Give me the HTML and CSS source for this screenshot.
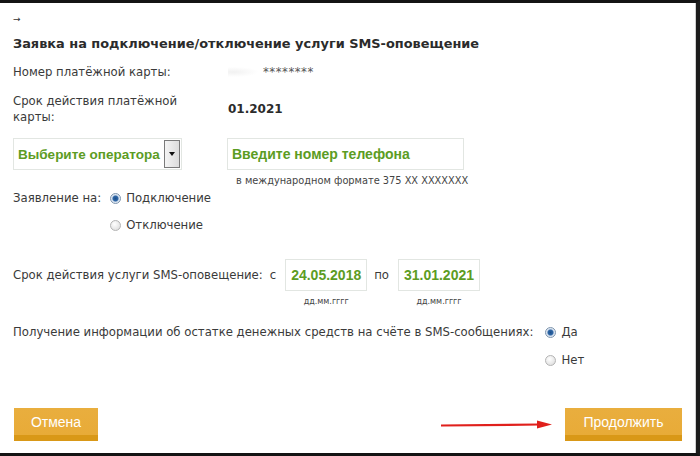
FILE: index.html
```html
<!DOCTYPE html>
<html lang="ru">
<head>
    <meta charset="UTF-8">
    <title>Заявка на SMS-оповещение</title>
    <link rel="stylesheet" href="styles.css">
</head>
<body>
    <div class="frame">
        <div class="back">&rarr;</div>
        <h1>Заявка на подключение/отключение услуги SMS-оповещение</h1>

        <div class="row row-card">
            <div class="label">Номер платёжной карты:</div>
            <div class="value masked"><span class="smudge"></span>********</div>
        </div>
        <div class="row row-expiry">
            <div class="label">Срок действия платёжной<br>карты:</div>
            <div class="value strong">01.2021</div>
        </div>

        <div class="row row-phone">
            <div class="select">
                <span class="select-text">Выберите оператора</span>
                <span class="select-btn"><i></i></span>
            </div>
            <div class="phone">
                <div class="field field-phone">Введите номер телефона</div>
                <div class="hint">в международном формате 375 XX XXXXXXX</div>
            </div>
        </div>

        <div class="choice choice-request">
            <span class="choice-label">Заявление на:</span>
            <div class="options">
                <label class="radio checked"><span class="dot"></span>Подключение</label>
                <label class="radio"><span class="dot"></span>Отключение</label>
            </div>
        </div>

        <div class="row row-period">
            <span class="period-label">Срок действия услуги SMS-оповещение:</span>
            <span class="sep">с</span>
            <div class="date">
                <div class="field field-date">24.05.2018</div>
                <div class="date-hint">дд.мм.гггг</div>
            </div>
            <span class="sep">по</span>
            <div class="date">
                <div class="field field-date">31.01.2021</div>
                <div class="date-hint">дд.мм.гггг</div>
            </div>
        </div>

        <div class="choice choice-balance">
            <span class="choice-label">Получение информации об остатке денежных средств на счёте в SMS-сообщениях:</span>
            <div class="options">
                <label class="radio checked"><span class="dot"></span>Да</label>
                <label class="radio"><span class="dot"></span>Нет</label>
            </div>
        </div>

        <div class="actions">
            <button class="btn btn-cancel">Отмена</button>
            <div class="next">
                <svg class="pointer" width="112" height="10" viewBox="0 0 112 10">
                    <path d="M0 5.5 L98 4.5" stroke="#e0201c" stroke-width="2.2" fill="none"/>
                    <path d="M96 0.5 L111 4.5 L96 8.5 Z" fill="#e0201c"/>
                </svg>
                <button class="btn btn-next">Продолжить</button>
            </div>
        </div>
    </div>
</body>
</html>
```

FILE: styles.css
```css
* {
    box-sizing: border-box;
}

body {
    margin: 0;
    background: #111;
    font-family: "DejaVu Sans", Verdana, sans-serif;
    font-size: 11.7px;
    color: #3a3a3a;
}

.frame {
    width: 700px;
    height: 456px;
    background: #fff;
    border-top: 3px solid #141414;
    border-right: 4px solid #1c1c1c;
    border-bottom: 3px solid #141414;
    box-shadow: inset -1px 0 0 #d0d0d0;
    padding: 0 0 0 13px;
}

.back {
    font-size: 9px;
    line-height: 10px;
    margin-top: 11px;
    color: #333;
}

h1 {
    font-size: 12.9px;
    font-weight: bold;
    color: #2b2b2b;
    margin: 12px 0 0;
    line-height: 16px;
}

.row {
    display: flex;
    align-items: center;
}

.label {
    width: 215px;
    line-height: 16px;
}

.row-card {
    height: 28px;
    margin-top: 6px;
}

.masked {
    color: #555;
    letter-spacing: 0.5px;
    display: flex;
    align-items: center;
}

.smudge {
    width: 35px;
    height: 12px;
    background: radial-gradient(ellipse at 15% 50%, #f1f1f1 0, #fff 60%);
}

.row-expiry {
    height: 34px;
    margin-top: 6px;
}

.strong {
    font-weight: bold;
    font-size: 12px;
    color: #2b2b2b;
}

.row-phone {
    margin-top: 12px;
    align-items: flex-start;
}

.select {
    width: 169px;
    height: 32px;
    border: 1px solid #e2e6e2;
    display: flex;
    align-items: center;
    justify-content: space-between;
    padding: 0 1px 0 4px;
    font-family: "Liberation Sans", Arial, sans-serif;
    font-weight: bold;
    font-size: 13.5px;
    color: #5c9c23;
}

.select-text {
    white-space: nowrap;
}

.select-btn {
    flex-shrink: 0;
    width: 16px;
    height: 28px;
    border: 1px solid #7a7a7a;
    background: linear-gradient(to right, #f4f4f4, #dcdcdc);
    display: flex;
    align-items: center;
    justify-content: center;
}

.select-btn i {
    width: 0;
    height: 0;
    border-left: 3px solid transparent;
    border-right: 3px solid transparent;
    border-top: 4px solid #111;
}

.phone {
    margin-left: 45px;
}

.field {
    height: 32px;
    border: 1px solid #e2e6e2;
    display: flex;
    align-items: center;
    font-family: "Liberation Sans", Arial, sans-serif;
    font-weight: bold;
    font-size: 14px;
    color: #5c9c23;
}

.field-phone {
    width: 237px;
    padding-left: 4px;
}

.hint {
    font-size: 9.8px;
    color: #444;
    margin: 5px 0 0 9px;
}

.choice {
    display: flex;
    align-items: flex-start;
    margin-top: 4px;
}

.choice-label {
    line-height: 16px;
}

.choice-request .choice-label {
    margin-right: 9px;
}

.options {
    display: flex;
    flex-direction: column;
    gap: 11px;
}

.radio {
    display: flex;
    align-items: center;
    line-height: 16px;
}

.dot {
    width: 11px;
    height: 11px;
    border-radius: 50%;
    border: 1px solid #b4b4b4;
    background: radial-gradient(circle at 40% 35%, #fff, #d8d8d8);
    margin-right: 5px;
}

.checked .dot {
    border-color: #7d94ad;
    background: radial-gradient(circle, #1c4f8c 0, #2f67a6 2.5px, #cfdcec 3.5px, #f4f7fb 5px);
}

.row-period {
    margin-top: 26px;
    align-items: flex-start;
}

.period-label,
.sep {
    line-height: 32px;
}

.sep {
    margin: 0 9px 0 7px;
}

.date {
    display: flex;
    flex-direction: column;
    align-items: center;
}

.field-date {
    width: 82px;
    justify-content: center;
}

.date-hint {
    font-size: 8px;
    color: #444;
    margin-top: 6px;
}

.choice-balance {
    margin-top: 18px;
}

.choice-balance .choice-label {
    margin-right: 12px;
}

.choice-balance .options {
    gap: 12px;
}

.actions {
    display: flex;
    justify-content: space-between;
    align-items: center;
    margin-top: 40px;
    padding-right: 14px;
}

.btn {
    height: 33px;
    padding: 0 0 5px;
    border: none;
    border-radius: 0;
    background: linear-gradient(to bottom, #e9ae3e 0, #e8ab38 81%, #d99817 81%, #d99817 100%);
    color: #fff;
    font-family: "Liberation Sans Narrow", "Liberation Sans", Arial, sans-serif;
    font-size: 14px;
    cursor: pointer;
}

.btn-cancel {
    width: 84px;
    margin-left: 1px;
}

.btn-next {
    width: 117px;
}

.next {
    display: flex;
    align-items: center;
}

.pointer {
    margin-right: 12px;
}
```
